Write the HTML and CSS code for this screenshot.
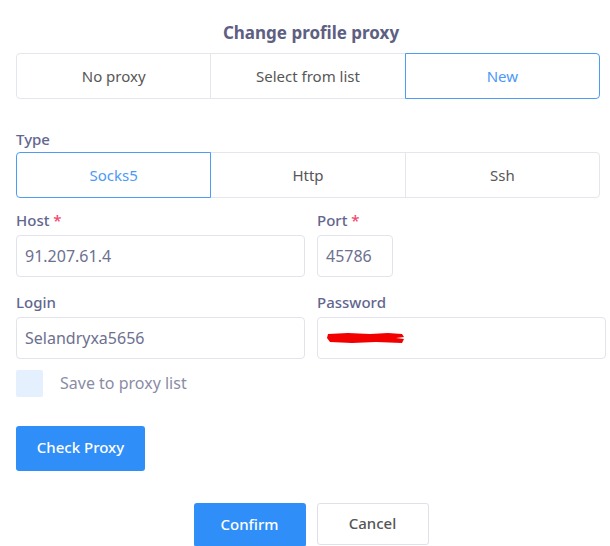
FILE: index.html
```html
<!DOCTYPE html>
<html>
<head>
<meta charset="utf-8">
<link rel="stylesheet" href="styles.css">
</head>
<body>
<div class="dialog">
  <div class="title">Change profile proxy</div>
  <div class="seg seg-wide">
    <div class="seg-item">No proxy</div>
    <div class="seg-item">Select from list</div>
    <div class="seg-item active">New</div>
  </div>
  <div class="label type-label">Type</div>
  <div class="seg seg-wide">
    <div class="seg-item active">Socks5</div>
    <div class="seg-item">Http</div>
    <div class="seg-item">Ssh</div>
  </div>
  <div class="grid row-host">
    <div class="field">
      <div class="label">Host <span class="req">*</span></div>
      <div class="input">91.207.61.4</div>
    </div>
    <div class="field">
      <div class="label">Port <span class="req">*</span></div>
      <div class="input port">45786</div>
    </div>
  </div>
  <div class="grid row-login">
    <div class="field">
      <div class="label">Login</div>
      <div class="input">Selandryxa5656</div>
    </div>
    <div class="field">
      <div class="label">Password</div>
      <div class="input">
        <svg class="scribble" width="80" height="14" viewBox="0 0 80 14">
          <path d="M2 3 L22 2 L44 3 L62 2 L76 3 L78 6 L70 7 L78 8 L76 12 L50 11 L26 12 L4 11 L1 7 Z" fill="#f20000"/>
        </svg>
      </div>
    </div>
  </div>
  <div class="check-row">
    <div class="checkbox"></div>
    <div class="check-label">Save to proxy list</div>
  </div>
  <div class="btn primary check-btn">Check Proxy</div>
  <div class="actions">
    <div class="btn primary action">Confirm</div>
    <div class="btn secondary action">Cancel</div>
  </div>
</div>
</body>
</html>
```
FILE: styles.css
```css
html, body {
  margin: 0;
  padding: 0;
  background: #ffffff;
}
body {
  font-family: "Noto Sans", Roboto, sans-serif;
  color: #555;
}
.dialog {
  width: 590px;
  margin-left: 16px;
}
.title {
  padding-top: 22px;
  line-height: 22px;
  height: 22px;
  margin-bottom: 9px;
  text-align: center;
  font-size: 17px;
  font-weight: 700;
  color: #5d6082;
}
.seg {
  display: flex;
  width: 584px;
  height: 46px;
}
.seg-item {
  flex: 1;
  display: flex;
  align-items: center;
  justify-content: center;
  border: 1px solid #e4e6ee;
  margin-left: -1px;
  padding-bottom: 1px;
  font-size: 15px;
  color: #575757;
  position: relative;
}
.seg-item:first-child {
  margin-left: 0;
  border-radius: 4px 0 0 4px;
}
.seg-item:last-child {
  border-radius: 0 4px 4px 0;
}
.seg-item.active {
  border-color: #4c9cf6;
  color: #4a9af6;
  z-index: 1;
}
.label {
  font-size: 15px;
  line-height: 18px;
  font-weight: 500;
  color: #62668f;
  margin-bottom: 6px;
}
.type-label {
  margin-top: 31px;
  margin-bottom: 4px;
}
.req {
  color: #f2476f;
}
.grid {
  display: grid;
  grid-template-columns: 289px 289px;
  column-gap: 12px;
}
.row-host {
  margin-top: 13px;
}
.row-login {
  margin-top: 16px;
}
.input {
  height: 40px;
  border: 1px solid #e2e3ec;
  border-radius: 4px;
  display: flex;
  align-items: center;
  padding-left: 8px;
  padding-bottom: 1px;
  box-sizing: content-box;
  font-size: 16px;
  color: #6d7090;
}
.input {
  height: 39px;
}
.input.port {
  width: 66px;
}
.scribble {
  display: block;
}
.check-row {
  display: flex;
  align-items: center;
  margin-top: 11px;
  height: 27px;
}
.checkbox {
  width: 27px;
  height: 27px;
  border-radius: 2px;
  background: #e4f0fe;
}
.check-label {
  margin-left: 17px;
  padding-bottom: 1px;
  font-size: 16px;
  color: #8a8ca6;
}
.btn {
  display: flex;
  align-items: center;
  justify-content: center;
  padding-bottom: 3px;
  font-size: 15px;
  font-weight: 500;
  border-radius: 3px;
  box-sizing: border-box;
}
.primary {
  background: #2f8ef8;
  color: #ffffff;
}
.check-btn {
  margin-top: 29px;
  width: 129px;
  height: 45px;
}
.actions {
  display: flex;
  justify-content: center;
  gap: 11px;
  margin-top: 32px;
}
.action {
  width: 112px;
  height: 44px;
}
.secondary {
  background: #ffffff;
  border: 1px solid #dfe1ea;
  color: #555555;
  height: 42px;
}
```
